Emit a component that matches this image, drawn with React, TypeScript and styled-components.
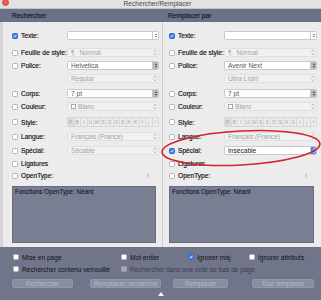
import React from 'react';
import styled, { createGlobalStyle } from 'styled-components';

const GlobalStyle = createGlobalStyle`
  *, *::before, *::after { box-sizing: border-box; }
  html, body { margin: 0; padding: 0; }
  body {
    width: 321px;
    height: 300px;
    overflow: hidden;
    background: #71758a;
    font-family: "Liberation Sans", Arial, sans-serif;
  }
`;

const Window = styled.div`
  position: relative;
  width: 321px;
  height: 300px;
  display: flex;
  flex-direction: column;
  background: #71758a;
  overflow: hidden;
  font-size: 6.6px;
  color: #111114;
`;

const TitleBar = styled.div`
  display: grid;
  grid-template-columns: 12px 1fr 12px;
  align-items: center;
  height: 9px;
  background: #e2e2e2;
  border-bottom: 1px solid #c4c4c8;
`;

const CloseDot = styled.span`
  width: 7px;
  height: 7px;
  margin: -3px 0 0 2px;
  border-radius: 50%;
  background: #ee5b53;
  border: 1px solid #d8463f;
`;

const Title = styled.div`
  text-align: center;
  color: #4a4a4a;
  margin-top: -1px;
  padding-right: 6px;
`;

const HeaderRow = styled.div`
  display: grid;
  grid-template-columns: 162px 1fr;
  height: 13px;
  background: #6d7187;
`;

const HeaderLabel = styled.div<{ $indent: number }>`
  padding-left: ${(p) => p.$indent}px;
  line-height: 13px;
  color: #15161c;
  -webkit-text-stroke: 0.15px #15161c;
`;

const Panels = styled.div`
  display: grid;
  grid-template-columns: 159px 159px;
  height: 225px;
  padding-left: 3px;
  background: #d6d6d8;
`;

const Panel = styled.div<{ $second?: boolean }>`
  display: flex;
  flex-direction: column;
  background: #ececec;
  padding: ${(p) => (p.$second ? '9px 4px 0 6px' : '9px 3px 0 9px')};
  border-left: ${(p) => (p.$second ? '1px solid #cdcdcf' : 'none')};
`;

const Row = styled.div<{ $gap: number }>`
  display: grid;
  grid-template-columns: 55px 1fr;
  align-items: center;
  height: 9px;
  margin-top: ${(p) => p.$gap}px;
`;

const LabelCell = styled.label`
  display: flex;
  align-items: center;
  gap: 3px;
  white-space: nowrap;
  color: #111;
  -webkit-text-stroke: 0.15px #111;
`;

const Check = styled.span<{ $checked?: boolean; $muted?: boolean }>`
  flex: none;
  width: 6px;
  height: 6px;
  display: inline-flex;
  align-items: center;
  justify-content: center;
  border-radius: 1.5px;
  -webkit-text-stroke: 0;
  background: ${(p) => (p.$checked ? '#3a7de8' : p.$muted ? '#a4a7b5' : '#ffffff')};
  border: 1px solid ${(p) => (p.$checked ? '#2d6cd3' : p.$muted ? '#999cab' : '#b3b3b6')};
`;

type Tone = 'input' | 'muted' | 'combo' | 'active';

const Field = styled.div<{ $tone: Tone }>`
  height: 9px;
  display: flex;
  align-items: center;
  gap: 2px;
  padding-left: 3px;
  border-radius: 1.5px;
  white-space: nowrap;
  overflow: hidden;
  background: ${(p) => (p.$tone === 'muted' ? '#f1f1f1' : '#ffffff')};
  border: 1px solid ${(p) => (p.$tone === 'muted' ? '#e0e0e0' : '#c9c9cc')};
  color: ${(p) =>
    p.$tone === 'muted' ? '#a3a3a6' : p.$tone === 'combo' ? '#55555a' : '#1a1a1a'};
`;

const Side = styled.span<{ $kind: 'stepper' | 'dark' | 'blue' | 'plain' }>`
  margin-left: auto;
  width: 6px;
  height: 100%;
  display: flex;
  align-items: center;
  justify-content: center;
  border-left: ${(p) => (p.$kind === 'plain' ? 'none' : '1px solid #c9c9cc')};
  border-radius: ${(p) => (p.$kind === 'blue' ? '1.5px' : '0')};
  background: ${(p) =>
    p.$kind === 'dark' ? '#b9b9bc' : p.$kind === 'blue' ? '#3b80ee' : 'transparent'};
`;

const Swatch = styled.span`
  width: 5px;
  height: 5px;
  border: 1px solid #a8a8ab;
  background: #fff;
`;

const StyleBar = styled.div`
  display: flex;
  height: 10px;
  border: 1px solid #d6d6d8;
  border-radius: 1.5px;
  overflow: hidden;
`;

const StyleCell = styled.span<{ $on?: boolean }>`
  flex: 1;
  display: flex;
  align-items: center;
  justify-content: center;
  font-size: 5px;
  color: #a5a5a8;
  background: ${(p) => (p.$on ? '#dcdcde' : '#ececee')};
  border-right: 1px solid #d9d9db;
  &:last-child { border-right: none; }
`;

const Spinner = styled.div`
  display: flex;
  justify-content: flex-end;
  padding-right: 8px;
`;

const FeatureBox = styled.div`
  margin-top: 6px;
  margin-right: 3px;
  height: 57px;
  padding: 1px 2px;
  background: #7a7e93;
  border: 1px solid #686c80;
  color: #16171e;
  font-size: 6.3px;
  -webkit-text-stroke: 0.1px #16171e;
`;

const Options = styled.div`
  display: grid;
  grid-template-columns: 108px 67px 61px 1fr;
  grid-auto-rows: 8px;
  row-gap: 4px;
  align-items: center;
  padding: 6px 0 0 13px;
`;

const Option = styled.label<{ $span?: number; $muted?: boolean }>`
  grid-column: span ${(p) => p.$span ?? 1};
  display: flex;
  align-items: center;
  gap: 3px;
  white-space: nowrap;
  color: ${(p) => (p.$muted ? '#3a3d4c' : '#101116')};
`;

const Buttons = styled.div`
  display: flex;
  margin-top: 6px;
  padding-left: 12px;
`;

const Button = styled.button<{ $w: number; $ml: number }>`
  width: ${(p) => p.$w}px;
  margin-left: ${(p) => p.$ml}px;
  height: 9px;
  padding: 0;
  border-radius: 2px;
  border: 1px solid #9397a9;
  background: #898da0;
  color: #b6bac7;
  font-family: inherit;
  font-size: 6.5px;
  line-height: 7px;
`;

const Grip = styled.div`
  align-self: center;
  margin: 4px 0 0 1px;
  width: 0;
  height: 0;
  border-left: 3px solid transparent;
  border-right: 3px solid transparent;
  border-bottom: 4px solid #f4f4f6;
`;

const Mark = styled.svg`
  position: absolute;
  left: 0;
  top: 0;
  pointer-events: none;
`;

const Tick = () => (
  <svg width="4" height="4" viewBox="0 0 4 4">
    <path d="M0.6 2.1 L1.6 3.1 L3.4 0.8" stroke="#fff" strokeWidth="0.9" fill="none" />
  </svg>
);

const Chevrons = ({ color = '#9c9ca0' }: { color?: string }) => (
  <svg width="4" height="7" viewBox="0 0 4 7">
    <path d="M0.7 2.6 L2 1.2 L3.3 2.6 M0.7 4.4 L2 5.8 L3.3 4.4" stroke={color} strokeWidth="0.8" fill="none" />
  </svg>
);

const Arrows = ({ color = '#555' }: { color?: string }) => (
  <svg width="4" height="7" viewBox="0 0 4 7">
    <path d="M0.8 3 L2 1.5 L3.2 3 Z M0.8 4 L2 5.5 L3.2 4 Z" fill={color} />
  </svg>
);

const Crescent = () => (
  <svg width="5" height="7" viewBox="0 0 5 7">
    <path d="M3.8 0.6 A3 3 0 0 0 3.8 6.4 A2.2 3 0 0 1 3.8 0.6 Z" fill="#8d8d92" />
  </svg>
);

const styleGlyphs = ['P', 'B', 'I', 'U', 'W', 'S', 'S', 'O', 'S', 'K', 'K', '²', '₂', 'ª'];

type PanelData = {
  font: string;
  weight: string;
  special: string;
  specialOn: boolean;
};

const Line = ({
  gap,
  label,
  checked,
  children,
}: {
  gap: number;
  label: string;
  checked?: boolean;
  children?: React.ReactNode;
}) => (
  <Row $gap={gap}>
    <LabelCell>
      <Check $checked={checked}>{checked && <Tick />}</Check>
      {label}
    </LabelCell>
    {children ?? <span />}
  </Row>
);

function FindPanel({ data, second }: { data: PanelData; second?: boolean }) {
  return (
    <Panel $second={second}>
      <Line gap={0} label="Texte:" checked>
        <Field $tone="input">
          <Side $kind="stepper">
            <Arrows color="#777" />
          </Side>
        </Field>
      </Line>
      <Line gap={8} label="Feuille de style:">
        <Field $tone="muted">
          <span>¶</span>
          <span style={{ marginLeft: 3 }}>Normal</span>
          <Side $kind="plain">
            <Chevrons />
          </Side>
        </Field>
      </Line>
      <Line gap={4} label="Police:">
        <Field $tone="combo">
          {data.font}
          <Side $kind="dark">
            <Arrows color="#444" />
          </Side>
        </Field>
      </Line>
      <Row $gap={4}>
        <span />
        <Field $tone="muted">
          {data.weight}
          <Side $kind="plain">
            <Chevrons />
          </Side>
        </Field>
      </Row>
      <Line gap={6} label="Corps:">
        <Field $tone="combo">
          7 pt
          <Side $kind="dark">
            <Arrows color="#444" />
          </Side>
        </Field>
      </Line>
      <Line gap={4} label="Couleur:">
        <Field $tone="muted">
          <Swatch />
          Blanc
          <Side $kind="plain">
            <Chevrons />
          </Side>
        </Field>
      </Line>
      <Line gap={6} label="Style:">
        <StyleBar>
          {styleGlyphs.map((g, i) => (
            <StyleCell key={i} $on={i === 0}>
              {g}
            </StyleCell>
          ))}
        </StyleBar>
      </Line>
      <Line gap={6} label="Langue:">
        <Field $tone="muted">
          Français (France)
          <Side $kind="plain">
            <Chevrons />
          </Side>
        </Field>
      </Line>
      <Line gap={5} label="Spécial:" checked={data.specialOn}>
        <Field $tone={data.specialOn ? 'active' : 'muted'}>
          {data.special}
          <Side $kind={data.specialOn ? 'blue' : 'plain'}>
            <Chevrons color={data.specialOn ? '#fff' : '#9c9ca0'} />
          </Side>
        </Field>
      </Line>
      <Line gap={4} label="Ligatures" />
      <Line gap={3} label="OpenType:">
        <Spinner>
          <Crescent />
        </Spinner>
      </Line>
      <FeatureBox>Fonctions OpenType: Néant</FeatureBox>
    </Panel>
  );
}

export default function App() {
  return (
    <>
      <GlobalStyle />
      <Window>
        <TitleBar>
          <CloseDot />
          <Title>Rechercher/Remplacer</Title>
          <span />
        </TitleBar>
        <HeaderRow>
          <HeaderLabel $indent={12}>Rechercher</HeaderLabel>
          <HeaderLabel $indent={6}>Remplacer par</HeaderLabel>
        </HeaderRow>
        <Panels>
          <FindPanel data={{ font: 'Helvetica', weight: 'Regular', special: 'Sécable', specialOn: false }} />
          <FindPanel
            second
            data={{ font: 'Avenir Next', weight: 'Ultra Light', special: 'Insécable', specialOn: true }}
          />
        </Panels>
        <Options>
          <Option>
            <Check />
            Mise en page
          </Option>
          <Option>
            <Check />
            Mot entier
          </Option>
          <Option>
            <Check $checked>
              <Tick />
            </Check>
            Ignorer maj
          </Option>
          <Option>
            <Check />
            Ignorer attributs
          </Option>
          <Option>
            <Check />
            Rechercher contenu verrouillé
          </Option>
          <Option $span={3} $muted>
            <Check $muted />
            Rechercher dans une note de bas de page
          </Option>
        </Options>
        <Buttons>
          <Button $w={61} $ml={0} disabled>Rechercher</Button>
          <Button $w={71} $ml={17} disabled>Remplacer, recherche</Button>
          <Button $w={55} $ml={12} disabled>Remplacer</Button>
          <Button $w={62} $ml={24} disabled>Tout remplacer</Button>
        </Buttons>
        <Grip />
        <Mark width="321" height="300" viewBox="0 0 321 300">
          <ellipse
            cx="241"
            cy="148"
            rx="79"
            ry="17"
            transform="rotate(-3 241 148)"
            fill="none"
            stroke="#d3232b"
            strokeWidth="1.6"
          />
        </Mark>
      </Window>
    </>
  );
}
